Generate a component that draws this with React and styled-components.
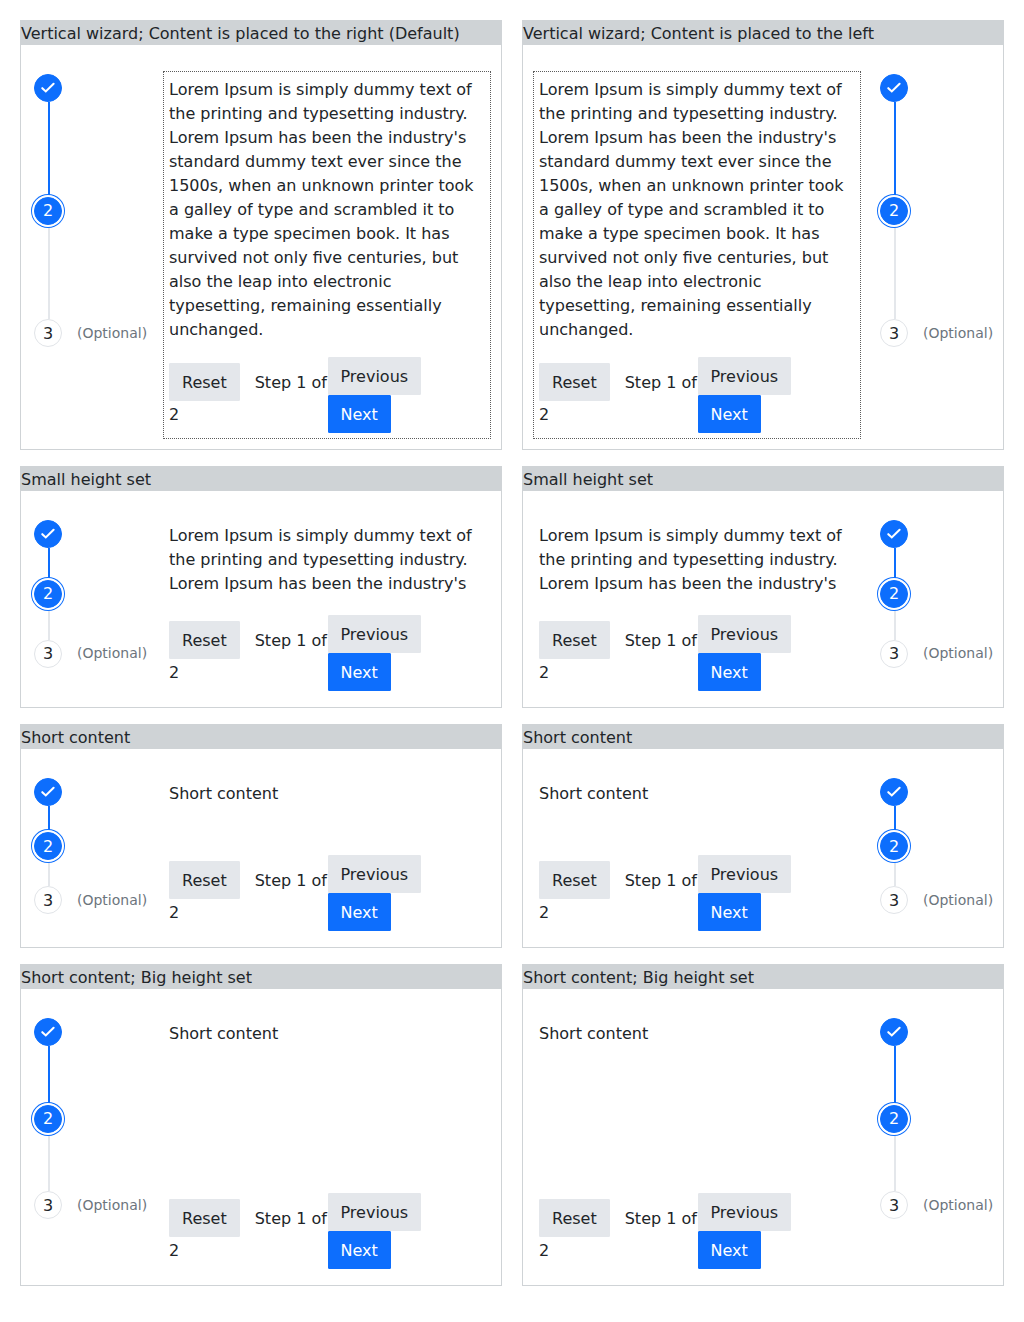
import React from "react";
import styled, { createGlobalStyle } from "styled-components";

const GlobalStyle = createGlobalStyle`
  *, *::before, *::after { box-sizing: border-box; }
  body {
    margin: 0;
    background: #fff;
    color: #212529;
    font: 16px/24px "DejaVu Sans", sans-serif;
  }
`;

const Page = styled.main`
  display: grid;
  grid-template-columns: 482px 482px;
  gap: 16px 20px;
  padding: 20px;
`;

const Card = styled.section`
  border: 1px solid #cfd3d6;
`;

const Title = styled.header`
  height: 24px;
  padding-top: 1px;
  background: #cfd3d6;
`;

const Wizard = styled.div`
  display: flex;
  flex-direction: ${(p) => (p.$reverse ? "row-reverse" : "row")};
  gap: 16px;
  padding: 26px 10px 10px;
`;

const Steps = styled.ol`
  display: flex;
  flex-direction: column;
  align-self: flex-start;
  width: 116px;
  height: ${(p) => p.$height}px;
  margin: 3px 0 0;
  padding: 0 0 0 3px;
  list-style: none;
`;

const Step = styled.li`
  flex: none;
  display: flex;
  align-items: center;
  gap: 15px;
  height: 28px;
`;

const Dot = styled.span`
  position: relative;
  z-index: 1;
  display: flex;
  flex: none;
  align-items: center;
  justify-content: center;
  width: 28px;
  height: 28px;
  padding-top: ${(p) => (p.$drop ? 2 : 0)}px;
  border-radius: 50%;
  border: 1px solid ${(p) => (p.$state === "todo" ? "#e1e4e8" : "#0d6efd")};
  background: ${(p) => (p.$state === "todo" ? "#fff" : "#0d6efd")};
  color: ${(p) => (p.$state === "todo" ? "#212529" : "#fff")};
  box-shadow: ${(p) => (p.$state === "active" ? "0 0 0 2px #fff, 0 0 0 3px #0d6efd" : "none")};
`;

const Line = styled.li`
  flex: 1;
  width: 2px;
  margin-left: 14px;
  background: ${(p) => (p.$done ? "#0d6efd" : "#e4e7eb")};
`;

const Optional = styled.span`
  padding-bottom: ${(p) => (p.$lift ? 2 : 0)}px;
  color: #6c757d;
  font-size: 14px;
  white-space: nowrap;
`;

const Panel = styled.div`
  width: 328px;
  padding: 5px;
  border: 1px dotted ${(p) => (p.$focused ? "#5c5c5c" : "transparent")};
`;

const Content = styled.div`
  height: ${(p) => p.$height}px;
  margin-bottom: 16px;
  padding-top: 1px;
  overflow: hidden;
`;

const Nav = styled.div`
  display: flex;
  align-items: flex-start;
`;

const Progress = styled.div`
  flex: none;
  width: 158.5px;
  padding-top: 6px;
`;

const Actions = styled.div`
  display: flex;
  flex-direction: column;
  align-items: flex-start;
`;

const Button = styled.button`
  height: 38px;
  padding: 7px 12px 5px;
  border: 1px solid ${(p) => (p.$primary ? "#0d6efd" : "#e4e7eb")};
  border-radius: 1px;
  background: ${(p) => (p.$primary ? "#0d6efd" : "#e4e7eb")};
  color: ${(p) => (p.$primary ? "#fff" : "#212529")};
  font: inherit;
`;

const ResetButton = styled(Button)`
  margin: 0 15px 2px 0;
`;

const LOREM =
  "Lorem Ipsum is simply dummy text of the printing and typesetting industry. Lorem Ipsum has been the industry's standard dummy text ever since the 1500s, when an unknown printer took a galley of type and scrambled it to make a type specimen book. It has survived not only five centuries, but also the leap into electronic typesetting, remaining essentially unchanged.";

const SECTIONS = [
  { text: LOREM, content: 264, steps: 273, focused: true, dropLast: true },
  { title: "Small height set", text: LOREM, content: 76, steps: 148, lift: true },
  { title: "Short content", text: "Short content", content: 58, steps: 136, dropActive: true, dropLast: true },
  { title: "Short content; Big height set", text: "Short content", content: 156, steps: 201, dropLast: true },
];

function Check() {
  return (
    <svg
      width="16"
      height="16"
      viewBox="0 0 16 16"
      fill="none"
      stroke="#fff"
      strokeWidth="2.1"
      strokeLinecap="round"
    >
      <path d="M2.3 8.2 L5.8 11.4 L13.6 3.8" />
    </svg>
  );
}

function WizardCard({ title, section, reverse }) {
  return (
    <Card>
      <Title>{title}</Title>
      <Wizard $reverse={reverse}>
        <Steps $height={section.steps}>
          <Step>
            <Dot $state="done"><Check /></Dot>
          </Step>
          <Line $done />
          <Step>
            <Dot $state="active" $drop={section.dropActive}>2</Dot>
          </Step>
          <Line />
          <Step>
            <Dot $state="todo" $drop={section.dropLast}>3</Dot>
            <Optional $lift={section.lift}>(Optional)</Optional>
          </Step>
        </Steps>
        <Panel $focused={section.focused}>
          <Content $height={section.content}>{section.text}</Content>
          <Nav>
            <Progress>
              <ResetButton>Reset</ResetButton>Step 1 of 2
            </Progress>
            <Actions>
              <Button>Previous</Button>
              <Button $primary>Next</Button>
            </Actions>
          </Nav>
        </Panel>
      </Wizard>
    </Card>
  );
}

export default function App() {
  return (
    <>
      <GlobalStyle />
      <Page>
        {SECTIONS.map((section, i) => (
          <React.Fragment key={i}>
            <WizardCard
              section={section}
              title={section.title || "Vertical wizard; Content is placed to the right (Default)"}
            />
            <WizardCard
              section={section}
              title={section.title || "Vertical wizard; Content is placed to the left"}
              reverse
            />
          </React.Fragment>
        ))}
      </Page>
    </>
  );
}
